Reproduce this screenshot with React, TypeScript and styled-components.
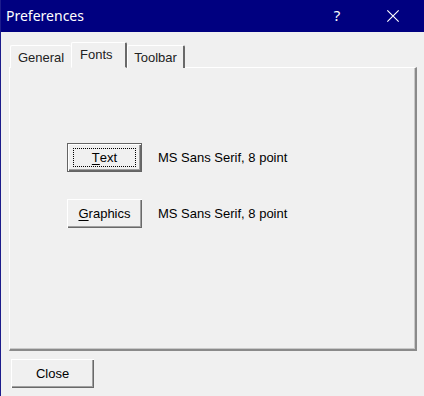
import React from 'react';
import styled, { createGlobalStyle } from 'styled-components';

// Classic Win32 "Preferences" property dialog
const App: React.FC = () => {
  return (
    <>
      <GlobalStyle />
      <Window>
        <TitleBar>
          <Title>Preferences</Title>
          <TitleButtons>
            <HelpGlyph>?</HelpGlyph>
            <CloseGlyph viewBox="0 0 16 16">
              <path d="M1.5 1.5 L14.5 14.5 M14.5 1.5 L1.5 14.5" stroke="#fff" strokeWidth="1.3" fill="none" />
            </CloseGlyph>
          </TitleButtons>
        </TitleBar>
        <Body>
          <TabStrip>
            <Tab w={61} noRight>
              General
            </Tab>
            <Tab w={56} active>
              Fonts
            </Tab>
            <Tab w={58}>Toolbar</Tab>
          </TabStrip>
          <Panel>
            <FontRow>
              <PushButton isDefault>
                <Focus>
                  <u>T</u>ext
                </Focus>
              </PushButton>
              <FontLabel>MS Sans Serif, 8 point</FontLabel>
            </FontRow>
            <FontRow>
              <PushButton>
                <u>G</u>raphics
              </PushButton>
              <FontLabel>MS Sans Serif, 8 point</FontLabel>
            </FontRow>
          </Panel>
          <Footer>
            <CloseButton>Close</CloseButton>
          </Footer>
        </Body>
      </Window>
    </>
  );
};

export default App;

const GlobalStyle = createGlobalStyle`
  html, body {
    margin: 0;
    padding: 0;
    background: #f0f0f0;
  }
  body {
    font-family: "Liberation Sans", Arial, sans-serif;
  }
`;

const Window = styled.div`
  width: 424px;
  height: 396px;
  box-sizing: border-box;
  border-left: 1px solid #1c1c8c;
  background: #f0f0f0;
  display: flex;
  flex-direction: column;
  overflow: hidden;
`;

const TitleBar = styled.div`
  height: 32px;
  background: #000080;
  display: flex;
  align-items: center;
  justify-content: space-between;
  padding-left: 5px;
  flex-shrink: 0;
`;

const Title = styled.span`
  color: #fff;
  font-family: "Noto Sans", "Liberation Sans", sans-serif;
  font-size: 14px;
  margin-top: -1px;
`;

const TitleButtons = styled.div`
  display: flex;
  align-items: center;
  height: 100%;
`;

const HelpGlyph = styled.span`
  color: #fff;
  font-family: "Noto Sans", "Liberation Sans", sans-serif;
  font-size: 15px;
  width: 46px;
  text-align: center;
  margin: -2px 5px 0 0;
`;

const CloseGlyph = styled.svg`
  width: 14px;
  height: 14px;
  margin: 0 24px 0 21px;
`;

const Body = styled.div`
  display: flex;
  flex-direction: column;
  padding: 10px 0 0 8px;
  color: #000;
`;

const TabStrip = styled.div`
  display: flex;
  align-items: flex-end;
  height: 26px;
  padding-left: 1px;
  position: relative;
  z-index: 1;
  margin-bottom: -1px;
`;

const Tab = styled.div<{ active?: boolean; noRight?: boolean; w: number }>`
  box-sizing: border-box;
  width: ${(p) => p.w}px;
  height: ${(p) => (p.active ? '26px' : '23px')};
  padding: ${(p) => (p.active ? '4px 4px 0 8px' : '4px 0 0 0')};
  text-align: ${(p) => (p.active ? 'left' : 'center')};
  border-top: 1px solid #fff;
  border-left: 1px solid #fff;
  border-right: ${(p) => (p.noRight ? 'none' : '2px solid #696969')};
  border-radius: 2px 2px 0 0;
  background: #f0f0f0;
  font-size: 13px;
  color: #222;
  white-space: nowrap;
  ${(p) => (p.active ? 'border-bottom: 1px solid #f0f0f0;' : 'border-bottom: none;')}
`;

const Panel = styled.div`
  box-sizing: border-box;
  width: 408px;
  height: 284px;
  border-top: 1px solid #fff;
  border-left: 1px solid #fff;
  border-right: 2px solid #8a8a8a;
  border-bottom: 2px solid #8a8a8a;
  box-shadow: inset -1px -1px 0 #c8c8c8;
  display: flex;
  flex-direction: column;
  gap: 27px;
  padding: 75px 0 0 57px;
`;

const FontRow = styled.div`
  display: flex;
  align-items: center;
  gap: 16px;
`;

const PushButton = styled.button<{ isDefault?: boolean }>`
  box-sizing: border-box;
  width: 75px;
  height: 29px;
  padding: 0;
  background: #f0f0f0;
  font-family: "Liberation Sans", Arial, sans-serif;
  font-size: 13px;
  color: #000;
  display: flex;
  align-items: center;
  justify-content: center;
  border: ${(p) => (p.isDefault ? '1px solid #646464' : 'none')};
  box-shadow: inset 1px 1px 0 #fff, inset -1px -1px 0 #696969, inset -2px -2px 0 #a0a0a0;
  u {
    text-underline-offset: 2px;
  }
`;

const Focus = styled.span`
  box-sizing: border-box;
  width: 63px;
  height: 19px;
  margin-top: -1px;
  border: 1px dotted #000;
  display: flex;
  align-items: center;
  justify-content: center;
`;

const FontLabel = styled.span`
  font-size: 13px;
`;

const Footer = styled.div`
  padding: 8px 0 0 2px;
`;

const CloseButton = styled.button`
  box-sizing: border-box;
  width: 83px;
  height: 29px;
  background: #f0f0f0;
  border: none;
  box-shadow: inset 1px 1px 0 #fff, inset -1px -1px 0 #696969, inset -2px -2px 0 #a0a0a0;
  font-family: "Liberation Sans", Arial, sans-serif;
  font-size: 13px;
  color: #000;
`;
